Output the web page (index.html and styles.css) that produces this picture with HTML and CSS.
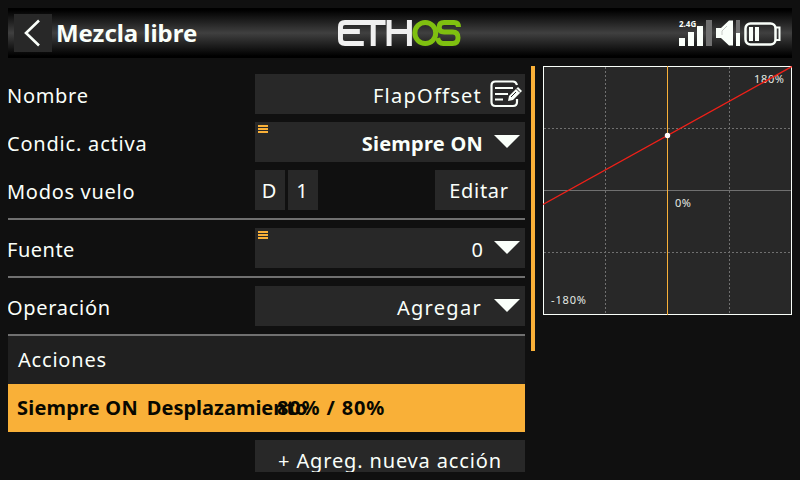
FILE: index.html
```html
<!DOCTYPE html>
<html lang="es">
<head>
<meta charset="utf-8">
<title>Mezcla libre</title>
<link rel="stylesheet" href="styles.css">
</head>
<body>
<header class="topbar">
  <button class="back" aria-label="Atrás"><svg width="38" height="38" viewBox="0 0 38 38"><path d="M25 6.500L12 19l13 12.500" fill="none" stroke="#fafffa" stroke-width="2.600"/></svg></button>
  <h1 class="title">Mezcla libre</h1>
  <svg class="logo" width="123" height="26" viewBox="0 0 124 26" preserveAspectRatio="none" fill="none" stroke-width="5">
    <path d="M48 2.500H7Q2.500 2.500 2.500 7V19Q2.500 23.500 7 23.500H26M2.500 11.500H22M35.500 2.500V26M51.500 0V26M51.500 11.500H72M72 0V26" stroke="#f0f0f0"/>
    <rect x="77.500" y="2.500" width="21" height="21" rx="10.500" stroke="#7fc010"/>
    <path d="M121.500 7Q121.500 2.500 117 2.500H107Q102 2.500 102 7.200Q102 12 107 12H115.500Q121 12 121 17.700Q121 23.500 115.500 23.500H106Q101.500 23.500 100.500 18" stroke="#7fc010"/>
  </svg>
  <div class="status">
    <div class="signal">
      <span class="band">2.4G</span>
      <svg width="34" height="28" viewBox="0 0 34 28" fill="#fafffa"><path d="M0 18h6v8H0zM9 12h6v14H9zM18 6h6v20h-6z"/><path d="M27 0h6v26h-6z" fill="#707070"/></svg>
    </div>
    <svg class="volume" width="24" height="28" viewBox="0 0 24 28"><path d="M0 8h5l8-7.500h4v25h-4L5 18H0z" fill="#fafffa"/><path d="M6 15V11l5-5" fill="none" stroke="#c4c8c4"/><path d="M20 0h4v13h-4z" fill="#707070"/><path d="M20 13h4v13h-4z" fill="#fafffa"/></svg>
    <svg class="battery" width="37" height="24" viewBox="0 0 37 24"><rect x="1.500" y="1.500" width="30" height="21" rx="5" fill="none" stroke="#fafffa" stroke-width="2.500"/><path d="M32 5.500h3.500v12.500H32" fill="none" stroke="#fafffa" stroke-width="2"/><path d="M5 5h4v14H5zM11 5h4v14h-4z" fill="#fafffa"/></svg>
  </div>
</header>
<main class="content">
  <section class="form">
    <div class="row"><label class="l-nombre">Nombre</label>
      <div class="field"><span class="v-name">FlapOffset</span>
        <svg class="edit" width="32" height="28" viewBox="0 0 32 28"><path d="M27 5Q26 1.500 23 1.500H5.500Q1.500 1.500 1.500 5.500V22Q1.500 26 5.500 26H23Q27 26 27 22V19" fill="none" stroke="#fafffa" stroke-width="2.200"/><path d="M5 8h18M5 14h13M5 19.500h8" stroke="#fafffa" stroke-width="2.200" fill="none"/><path d="M18 21l1-5 9-9 4 4-9 9z" fill="#fafffa"/><path d="M21 17l5-5M26 8.500l4 4" stroke="#282828"/></svg></div></div>
    <div class="row"><label class="l-cond">Condic. activa</label>
      <div class="field"><i class="menu"></i><b class="v-cond">Siempre ON</b><i class="arrow"></i></div></div>
    <div class="row"><label class="l-modos">Modos vuelo</label>
      <div class="modes"><span class="mode">D</span><span class="mode">1</span><button class="editar">Editar</button></div></div>
    <div class="row ruled"><label class="l-fuente">Fuente</label>
      <div class="field"><i class="menu"></i><span class="v-zero">0</span><i class="arrow"></i></div></div>
    <div class="row ruled"><label class="l-oper">Operación</label>
      <div class="field"><span class="v-agregar">Agregar</span><i class="arrow"></i></div></div>
    <h2 class="actions">Acciones</h2>
    <div class="selected"><span class="s-name">Siempre ON</span><span class="s-type">Desplazamiento</span><span class="s-value">80% / 80%</span></div>
    <button class="add">+ Agreg. nueva acción</button>
  </section>
  <div class="scrollbar"></div>
  <svg class="chart" width="249" height="249" viewBox="0 0 249 249">
    <g shape-rendering="crispEdges" fill="none">
      <rect x=".5" y=".5" width="248" height="248" fill="#282828" stroke="#fafffa"/>
      <path d="M62.500 1V248M186.500 1V248M1 62.500H248M1 186.500H248" stroke="#707070" stroke-dasharray="2 2"/>
      <path d="M1 124.500H248" stroke="#707070"/>
      <path d="M124.500 0V249" stroke="#f9b038"/>
    </g>
    <g class="chart-text"><text x="211" y="17" textLength="30">180%</text><text x="132" y="141" textLength="16">0%</text><text x="8" y="238" textLength="35">-180%</text></g>
    <path d="M0 138.500L249 .5" stroke="#f02018" stroke-width="1.400"/>
    <circle cx="124.500" cy="69.500" r="2.700" fill="#fff"/>
  </svg>
</main>
</body>
</html>
```
FILE: styles.css
```css
* { box-sizing: border-box; }
body {
  margin: 0;
  width: 800px;
  height: 480px;
  overflow: hidden;
  background: #101010;
  color: #fafffa;
  font: 20px/40px "Noto Sans", sans-serif;
}
button { border: 0; padding: 0; font: inherit; color: inherit; background: #282828; }
svg { display: block; }
.topbar {
  position: relative;
  display: flex;
  align-items: center;
  height: 50px;
  margin: 8px 8px 0;
  padding-left: 6px;
  background: linear-gradient(#000 0, #000 4%, #404040 50%, #000 96%);
}
.back { width: 38px; height: 38px; }
.title { margin: 0 0 0 4px; font-size: 24px; line-height: 50px; font-weight: 700; letter-spacing: -.05px; word-spacing: -1px; }
.logo { position: absolute; left: 330px; top: 12px; }
.status { display: flex; margin-left: auto; padding-right: 11px; height: 28px; margin-top: 2px; }
.signal { margin-right: 3px; }
.band { position: absolute; font-size: 8px; font-weight: 700; line-height: 7px; }
.volume { margin-right: 4px; }
.battery { margin-top: 2px; }
.content { display: flex; align-items: flex-start; margin: 8px 8px 0; }
.form { width: 517px; height: 406px; overflow: hidden; }
.row { display: flex; justify-content: space-between; height: 48px; padding-top: 8px; }
.row label { margin-left: -1px; line-height: 43px; white-space: nowrap; letter-spacing: .7px; }
.row .l-cond { letter-spacing: .8px; }
.row .l-fuente { letter-spacing: .5px; }
.row.ruled { height: 50px; border-top: 2px solid #707070; margin-top: 8px; }
.field {
  position: relative;
  display: flex;
  justify-content: flex-end;
  width: 270px;
  height: 40px;
  background: #282828;
}
.field span, .field b { line-height: 43px; }
.v-name { letter-spacing: 1.25px; }
.v-cond { letter-spacing: .25px; }
.v-agregar { letter-spacing: 1.3px; margin-right: 1px; }
.edit { margin: 6px 3px 0 8px; }
.arrow {
  width: 26px;
  height: 13px;
  margin: 13px 5px 0 11px;
  background: #fafffa;
  clip-path: polygon(0 0, 100% 0, 50% 100%);
}
.menu {
  position: absolute;
  left: 3px;
  top: 3px;
  width: 10px;
  height: 8px;
  background: repeating-linear-gradient(#f9b038 0 2px, transparent 2px 3px);
}
.modes { display: flex; gap: 3px; width: 270px; }
.mode, .editar { height: 40px; background: #282828; text-align: center; line-height: 42px; }
.mode { width: 30px; padding-right: 2px; }
.editar { width: 90px; margin-left: auto; padding-right: 2px; letter-spacing: .7px; }
.actions {
  margin: 8px 0 0;
  height: 50px;
  padding-left: 10px;
  border-top: 2px solid #707070;
  background: #202020;
  font-size: 20px;
  font-weight: 400;
  line-height: 48px;
  letter-spacing: .8px;
}
.selected {
  position: relative;
  display: flex;
  height: 48px;
  padding-left: 9px;
  background: #f9b038;
  color: #080800;
  font-weight: 700;
  line-height: 48px;
}
.s-name { letter-spacing: .2px; }
.s-type { margin-left: 9px; }
.s-value { position: absolute; left: 269px; top: 0; letter-spacing: .85px; }
.add { display: block; width: 270px; height: 40px; margin: 8px 0 0 auto; line-height: 42px; letter-spacing: .85px; }
.scrollbar { width: 4px; height: 285px; margin: 0 8px 0 6px; background: #f9b038; }
.chart-text { font-size: 11px; fill: #e4e8e4; }
```
